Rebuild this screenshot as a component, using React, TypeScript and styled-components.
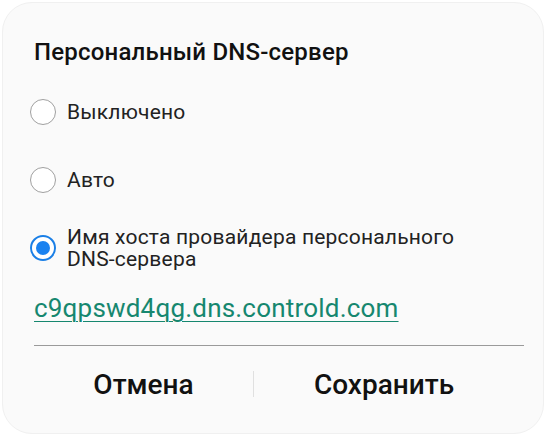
import { createGlobalStyle, styled } from "styled-components";

const GlobalStyle = createGlobalStyle`
  html, body {
    margin: 0;
    padding: 0;
    background: #ffffff;
    font-family: Roboto, "Noto Sans", sans-serif;
  }
`;

interface OptionInterface {
  label: string;
  checked?: boolean;
}

const options: OptionInterface[] = [
  { label: "Выключено" },
  { label: "Авто" },
  { label: "Имя хоста провайдера персонального DNS-сервера", checked: true },
];

const Radio = ({ checked }: { checked?: boolean }) => (
  <RadioStyled $checked={checked}>{checked && <RadioDot />}</RadioStyled>
);

const App = () => {
  return (
    <>
      <GlobalStyle />
      <DialogStyled>
        <TitleStyled>Персональный DNS-сервер</TitleStyled>
        <OptionListStyled>
          {options.map((o) => (
            <OptionStyled key={o.label} $multi={!!o.checked}>
              <Radio checked={o.checked} />
              <OptionLabel>{o.label}</OptionLabel>
            </OptionStyled>
          ))}
        </OptionListStyled>
        <HostLink>c9qpswd4qg.dns.controld.com</HostLink>
        <Divider />
        <ButtonRow>
          <ActionButton $basis="219px">Отмена</ActionButton>
          <ButtonSeparator />
          <ActionButton>Сохранить</ActionButton>
        </ButtonRow>
      </DialogStyled>
    </>
  );
};

const DialogStyled = styled.div`
  margin: 2px;
  height: 432px;
  box-sizing: border-box;
  border-radius: 30px;
  background: #fafafa;
  border: 1px solid #f0f0f0;
  padding: 34px 19px 0 31px;
  display: flex;
  flex-direction: column;
`;

const TitleStyled = styled.div`
  font-size: 24px;
  font-weight: 500;
  color: #111111;
  line-height: 30px;
  margin-bottom: 11px;
  letter-spacing: 0.2px;
`;

const OptionListStyled = styled.div`
  display: flex;
  flex-direction: column;
  margin-left: -4px;
`;

const OptionStyled = styled.div<{ $multi: boolean }>`
  display: flex;
  align-items: center;
  gap: 11px;
  height: ${(p) => (p.$multi ? "48px" : "68px")};
  margin-top: ${(p) => (p.$multi ? "10px" : "0")};
`;

const RadioStyled = styled.div<{ $checked?: boolean }>`
  width: 26px;
  height: 26px;
  flex-shrink: 0;
  box-sizing: border-box;
  border-radius: 50%;
  border: ${(p) => (p.$checked ? "2px solid #1a7fe6" : "1.5px solid #a0a0a0")};
  background: #ffffff;
  display: flex;
  align-items: center;
  justify-content: center;
`;

const RadioDot = styled.div`
  width: 14px;
  height: 14px;
  border-radius: 50%;
  background: #1a82f0;
`;

const OptionLabel = styled.div`
  font-size: 21px;
  color: #222222;
  line-height: 22px;
  letter-spacing: 0.2px;
  max-width: 420px;
`;

const HostLink = styled.div`
  margin-top: 21px;
  font-size: 26px;
  color: #16876f;
  text-decoration: underline;
  text-underline-offset: 4px;
  text-decoration-thickness: 1px;
  line-height: 30px;
  letter-spacing: 0.2px;
`;

const Divider = styled.div`
  margin-top: 22px;
  height: 1px;
  background: #9a9a9a;
`;

const ButtonRow = styled.div`
  display: flex;
  align-items: center;
  height: 76px;
  padding-right: 10px;
`;

const ActionButton = styled.div<{ $basis?: string }>`
  flex: ${(p) => (p.$basis ? `0 0 ${p.$basis}` : "1")};
  text-align: center;
  font-size: 28px;
  font-weight: 500;
  color: #111111;
`;

const ButtonSeparator = styled.div`
  width: 1px;
  height: 26px;
  background: #e0e0e0;
`;

export default App;
